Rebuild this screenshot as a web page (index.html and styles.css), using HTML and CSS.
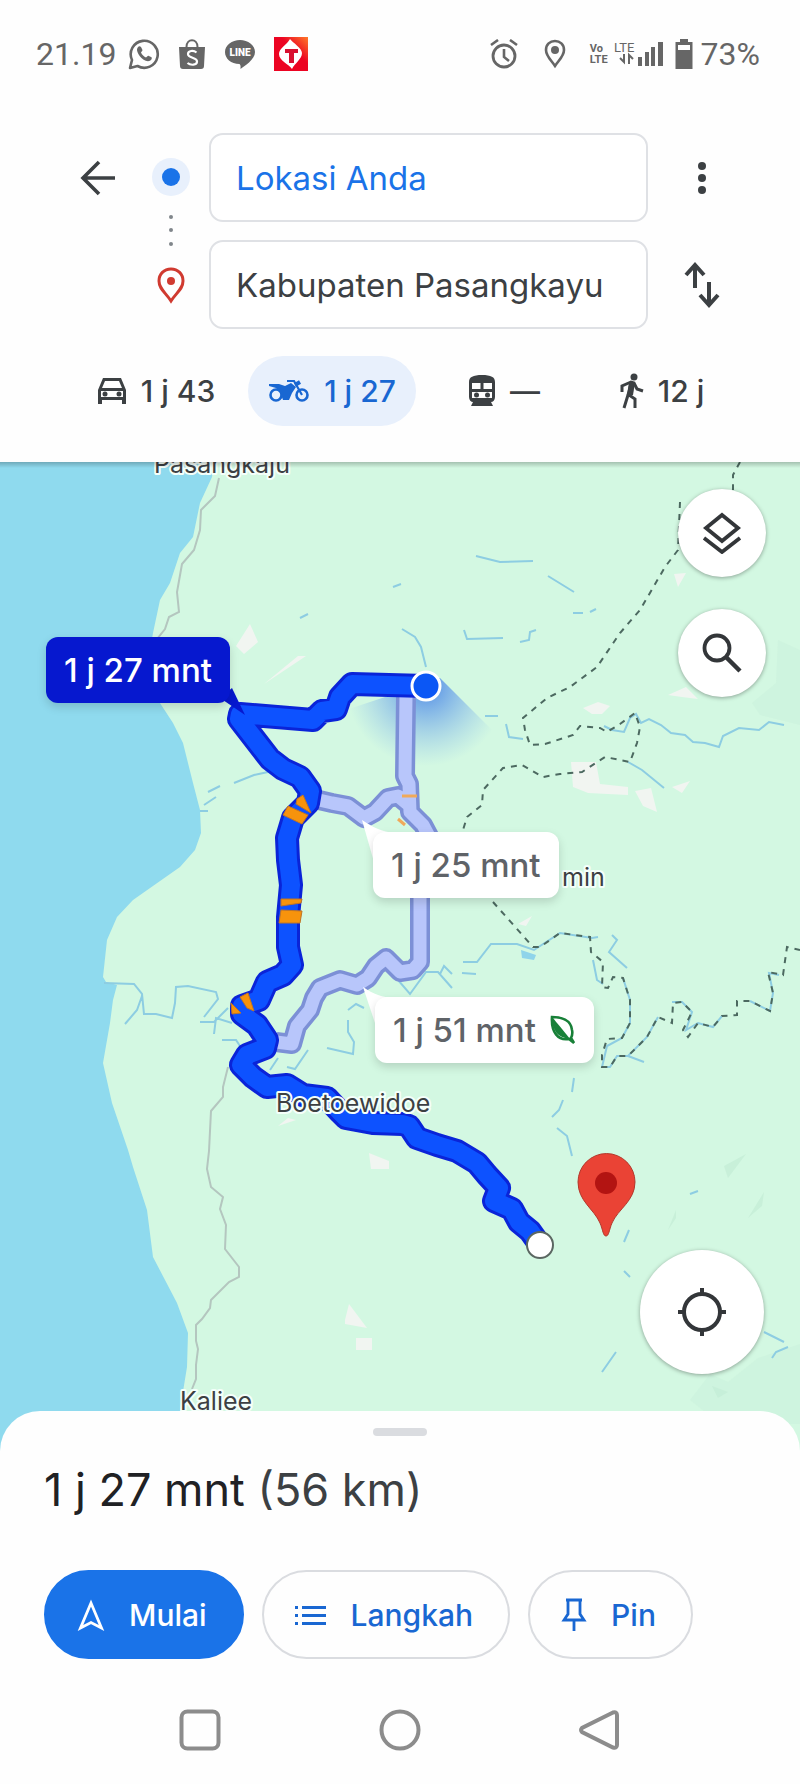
FILE: index.html
```
<!DOCTYPE html>
<html lang="id">
<head>
    <meta charset="UTF-8">
    <meta name="viewport" content="width=device-width, initial-scale=1.0">
    <title>Rute - Kabupaten Pasangkayu</title>
    <link rel="stylesheet" href="styles.css">
</head>
<body>
    <!-- Phone status bar -->
    <div class="status-bar">
        <div class="status-left">
            <span class="clock">21.19</span>
            <svg width="32" height="32" viewBox="0 0 32 32">
                <path d="M2 30l2-8A13.500 13.500 0 1 1 9.500 28z" fill="none" stroke="#666" stroke-width="2.600" stroke-linejoin="round"/>
                <path d="M10 9c1-1 2-1 3 0l1.500 3c0 1-1.500 2-1.500 2.500 1 2.500 3 4 5 5 1-.5 1.500-2 2.500-1.800l3 1.500c1 1-.5 4-3.500 4C14 23 8.500 15 9 11z" fill="#666"/>
            </svg>
            <svg width="28" height="32" viewBox="0 0 28 32">
                <path d="M1 9h26l-1 19a3 3 0 0 1-3 3H5a3 3 0 0 1-3-3z" fill="#666"/>
                <path d="M8.500 9c0-9 11-9 11 0" fill="none" stroke="#666" stroke-width="2"/>
                <path d="M18.500 14.500c-3-2.500-8.500-2-8.500 1.500 0 4.500 9 3 9 7.500 0 4-6.500 4-9.500 1.500" fill="none" stroke="#fff" stroke-width="2.200"/>
            </svg>
            <svg width="32" height="32" viewBox="0 0 32 32">
                <path d="M16 2c8 0 15 5 15 12 0 8-11 14-14.500 17 0-2 .5-4-1-5C7 26 1 20.500 1 14 1 7 8 2 16 2z" fill="#666"/>
                <text x="16" y="18" class="line-logo">LINE</text>
            </svg>
            <svg width="34" height="34" viewBox="0 0 34 34">
                <defs>
                    <linearGradient id="tsel" x1="0" y1="1" x2="1" y2="0">
                        <stop offset="0.600" stop-color="#ec0422"/>
                        <stop offset="1" stop-color="#ff7a2a"/>
                    </linearGradient>
                </defs>
                <path d="M0 0h34v34H0z" fill="url(#tsel)"/>
                <path d="M16 2c3 4 12 9 12 14 0 6-7 10-10 16C15 27 5 24 5 17 5 11 13 8 16 2z" fill="#fff"/>
                <path d="M11 12h13v4h-4v10h-5V16h-4z" fill="#d81030"/>
            </svg>
        </div>
        <div class="status-right">
            <svg class="alarm" width="28" height="30" viewBox="0 0 28 30" fill="none" stroke="#666">
                <circle cx="14" cy="17" r="11" stroke-width="2.800"/>
                <path d="M14 10v8l5 4M1 6l7-5M27 6l-7-5" stroke-width="2.600"/>
            </svg>
            <svg class="place" width="22" height="30" viewBox="0 0 22 30">
                <path d="M11 2c-5 0-9 3.500-9 9 0 6 5 10 9 16 4-6 9-10 9-16 0-5.500-4-9-9-9z" fill="none" stroke="#666" stroke-width="2.600"/>
                <circle cx="11" cy="11" r="4" fill="#666"/>
            </svg>
            <span class="volte">Vo<br>LTE</span>
            <svg class="signal" width="50" height="26" viewBox="0 0 50 26">
                <text x="0" y="11" class="lte">LTE</text>
                <path d="M10 13v8l-4-4M15 23v-9l4 4" fill="none" stroke="#666" stroke-width="2"/>
                <path d="M24 16h4v9h-4zM31 11h4v14h-4zM37 6h4v19h-4zM44 1h5v24h-5z" fill="#666"/>
            </svg>
            <svg class="battery" width="18" height="30" viewBox="0 0 18 30">
                <path d="M5 0h8v3h4.500v27H.5V3H5zM3 6v5h12V6z" fill="#666" fill-rule="evenodd"/>
            </svg>
            <span class="percent">73%</span>
        </div>
    </div>

    <!-- Origin and destination -->
    <header class="directions">
        <form class="places">
            <button type="button" class="icon-btn back" aria-label="Kembali">
                <svg width="38" height="38" viewBox="0 0 38 38" fill="none" stroke="#3c4043" stroke-width="3.600">
                    <path d="M36 19H4M20 3L4 19l16 16"/>
                </svg>
            </button>
            <svg class="markers" width="40" height="196" viewBox="0 0 40 196">
                <circle cx="20" cy="44" r="19" fill="#e8f0fc"/>
                <circle cx="20" cy="44" r="9" fill="#1a73e8"/>
                <g fill="#80868b">
                    <circle cx="20" cy="84" r="2"/>
                    <circle cx="20" cy="97" r="2"/>
                    <circle cx="20" cy="111" r="2"/>
                </g>
                <path d="M20 136c-7 0-12 5-12 12 0 8 7 12 12 20 5-8 12-12 12-20 0-7-5-12-12-12z" fill="none" stroke="#d03a30" stroke-width="3"/>
                <circle cx="20" cy="148" r="4" fill="#d03a30"/>
            </svg>
            <input class="place-input origin" type="text" value="Lokasi Anda" aria-label="Titik awal">
            <button type="button" class="icon-btn more" aria-label="Opsi lainnya">
                <svg width="10" height="34" viewBox="0 0 10 34" fill="#3c4043">
                    <circle cx="5" cy="5" r="4"/>
                    <circle cx="5" cy="17" r="4"/>
                    <circle cx="5" cy="29" r="4"/>
                </svg>
            </button>
            <input class="place-input destination" type="text" value="Kabupaten Pasangkayu" aria-label="Tujuan">
            <button type="button" class="icon-btn swap" aria-label="Tukar">
                <svg width="36" height="46" viewBox="0 0 36 46" fill="none" stroke="#3c4043" stroke-width="4">
                    <path d="M11 26V3M2 13l9-10 9 10M25 20v23M16 33l9 10 9-10"/>
                </svg>
            </button>
        </form>

        <nav class="modes">
            <button type="button" class="mode">
                <svg width="30" height="28" viewBox="0 0 30 28">
                    <path d="M6 1h18l5 12v14h-4v-4H5v4H1V13zM8 4l-3 7h20l-3-7zM4 14v6h22v-6z" fill="#3c4043" fill-rule="evenodd"/>
                    <circle cx="8" cy="17" r="2.500" fill="#3c4043"/>
                    <circle cx="22" cy="17" r="2.500" fill="#3c4043"/>
                </svg>
                <span>1 j 43</span>
            </button>
            <button type="button" class="mode active">
                <svg width="42" height="26" viewBox="0 0 42 26" fill="none" stroke="#1967d2" stroke-width="2.600">
                    <circle cx="8" cy="17" r="5.500"/>
                    <circle cx="34" cy="17" r="5.500"/>
                    <path d="M34 17L26 3h-7" stroke-width="2.200"/>
                    <path d="M1 6h10l6 2 6-3 5 4-4 6-3 7h-6l-3-8-4-4-7-2z" fill="#1967d2" stroke="none"/>
                    <path d="M27 7l5-3" stroke-width="4"/>
                </svg>
                <span>1 j 27</span>
            </button>
            <button type="button" class="mode transit">
                <svg width="28" height="34" viewBox="0 0 28 34">
                    <path d="M14 1C5 1 1 3 1 8v15c0 3 2 5 4 5l-2 4h22l-2-4c2 0 4-2 4-5V8c0-5-4-7-13-7zM4 9h8.500v6H4zM15.500 9H24v6h-8.500zM4 18h20v6H4z" fill="#3c4043" fill-rule="evenodd"/>
                    <circle cx="8.500" cy="21" r="2.500" fill="#3c4043"/>
                    <circle cx="19.500" cy="21" r="2.500" fill="#3c4043"/>
                </svg>
                <span>—</span>
            </button>
            <button type="button" class="mode">
                <svg width="24" height="36" viewBox="0 0 24 36">
                    <circle cx="14" cy="4" r="3.500" fill="#3c4043"/>
                    <path d="M2 19v-6l9-4 3 1 3 6 6 2M11 10l-3 12-4 13M9 22l6 4v9" fill="none" stroke="#3c4043" stroke-width="3"/>
                    <path d="M9 9l6 1-2 12-6 2z" fill="#3c4043"/>
                </svg>
                <span>12 j</span>
            </button>
        </nav>
    </header>

    <!-- Map -->
    <main class="map">
        <svg class="map-canvas" viewBox="0 462 800 990" preserveAspectRatio="xMinYMin slice">
            <defs>
                <radialGradient id="beam" gradientUnits="userSpaceOnUse" cx="426" cy="686" r="80">
                    <stop offset="0" stop-color="#2f6fe8" stop-opacity="0.800"/>
                    <stop offset="1" stop-color="#6fa8f0" stop-opacity="0"/>
                </radialGradient>
                <linearGradient id="edge" x1="0" y1="0" x2="0" y2="1">
                    <stop offset="0" stop-color="#000" stop-opacity="0.220"/>
                    <stop offset="1" stop-color="#000" stop-opacity="0"/>
                </linearGradient>
            </defs>

            <path d="M0 462H2000V1452H0z" fill="#d3f8e2"/>

            <!-- hill shading -->
            <g fill="#c3ecd6">
                <path d="M778 640l22 10v75l-40-10-8-12 24-20zM690 1400l20-26 18 8 30-24 42-14v80h-80z" opacity="0.300"/>
                <path d="M724 1166l22-12-18 24zM748 1218l16-26-2 14zM668 1230l8-20v8zM712 1386l16 6-10 6z" opacity="0.700"/>
            </g>

            <!-- sea -->
            <path d="M0 462H214L212 477 200 503 193 537 180 553 170 583 160 600 153 633 150 650 158 700 173 723 183 743 193 783 200 810 201 833 195 850 180 867 133 900 117 917 107 940 103 977 106 982 117 985 113 1000 110 1023 103 1063 112 1103 128 1150 133 1167 147 1210 153 1257 177 1303 188 1333 187 1367 180 1410 176 1452H0z" fill="#8fdaee"/>

            <!-- clearings -->
            <g fill="#f1f5f1">
                <path d="M236 646l14-22 8 18-14 12zM264 684l34-28h8zM571 762h25l4 22 28 3v8l-40-2-15-6zM635 791l16-3 6 24-14-6zM672 787l18-6-8 12zM583 708l15-6 12 4-8 8h-10zM674 574l12-1-8 14zM668 695l18-8 12 12-16-2zM518 924l14-8-6 10zM278 1126l10-8 8 2zM369 1153l20 8v8h-18zM345 1320l4-16 18 24-22-4zM356 1338h16v12h-16z"/>
            </g>

            <!-- rivers -->
            <g fill="none" stroke="#8dcde2" stroke-width="2">
                <path d="M476 556l24 6 33-1M548 576l26 16M573 613h10M590 612l6-3M464 630l3 9 36-1M520 642l9-2 1-8 6-2M393 587l8-3M300 618l8-4M402 629l13 8 6 10 5 20"/>
                <path d="M485 716h13M506 724l3 13 14 2M604 726l8 4 12 2 6-14 6-4 5 9 8-4 12 6 10 8 14 2 8 7 12 1 14 4 4-11 16-8 20 2 10-8 15 3M628 762l14 8 22 18"/>
                <path d="M234 783l20-8 14-3M204 805l12-8M208 792l12-6M200 811h8"/>
                <path d="M104 983l30 1 8 10 2 20 12 0 16 4 3-15 1-16 12-1 28 6 2 7-14 18M142 996l-5 14-12 14M200 1022h14l14-14M214 1034l2-16 16 5M222 1040l14 0 4 6"/>
                <path d="M270 1070l8-12M287 1067l8 2 13-19M348 1020v12l6 10-1 12-26-6M348 1010l8-6 8 4M398 980l12 14 16-22 12 0 14 16M440 974l4-8 8 8M463 962h14l14-18h26l17 6 26-17 32 5 6-1M612 935l5 5-8 12 18 16M593 960l4 20 6 4M462 973l14 1"/>
                <path d="M623 978l7 22v23l-8 15-15 8-5 21 8 0 7-11 11 0 19-19 11-20M628 1056l16 6M672 1002l10 0 10 10-6 18 12-7 15 4 9-11M750 1001l20 10 3-18-4-20 10 2M574 1078l-2 14M563 1100l-4 10-7 7M557 1128l10 8 5 20M624 1242l5-12M624 1271l6 6M602 1372l14-20M764 1332l20 10M772 1358l4-6 12-5M690 1194l8-3"/>
            </g>
            <path d="M521 950l15 5-2 5-12-2z" fill="#8fd4ea"/>

            <!-- roads -->
            <path d="M219 478l-4 18-14 14-1 20-6 20-12 14-5 28 2 20-10 5-4 12-8 10M228 1067l-5 20v10l-12 14-2 40-2 18 4 18 12 10-3 12 6 16-1 24 14 18v10l-10 5-18 18-1 8-8 11-6 6v16l2 8-2 16v14l-4 10" fill="none" stroke="#b4c6bf" stroke-width="2"/>

            <!-- district borders -->
            <g fill="none" stroke="#4c6960" stroke-width="2" stroke-dasharray="6 6">
                <path d="M740 462L733 475V490M680 502L678 550 665 567 640 610 620 633 597 667 570 687 547 698 523 718 525 730 530 745 545 744 573 735 580 726 600 728 607 732 620 724 635 713 640 727 637 743 630 762 605 757 582 772 560 774 543 777 522 765 503 768 483 790 482 805 467 817 463 830"/>
                <path d="M493 902L533 947 540 947 560 933 590 937 591 952 603 962 602 987 608 988 613 977 623 978 630 1000V1023L622 1038 607 1039 602 1055V1067H610L617 1056H628L647 1037 658 1017 672 1023 673 1003 682 1002 692 1012 683 1030 688 1037 698 1023 713 1027 722 1016 737 1015V1001H750L770 1011 773 993 768 972 783 975 787 947 800 950"/>
            </g>

            <!-- alternative routes -->
            <path d="M440 678L492 730V780H340V712L400 692z" fill="url(#beam)"/>
            <g class="route alt">
                <path class="casing" d="M406 696L405 776 409 784 410 812 423 825 431 840 420 860V962L413 970 400 972 394 966 386 958 376 966 368 978 357 985 340 980 320 988 314 998 310 1010 297 1026 292 1044 276 1042M410 806L398 796 388 798 375 812 364 818 348 806 332 803 306 797"/>
                <path class="fill" d="M406 696L405 776 409 784 410 812 423 825 431 840 420 860V962L413 970 400 972 394 966 386 958 376 966 368 978 357 985 340 980 320 988 314 998 310 1010 297 1026 292 1044 276 1042M410 806L398 796 388 798 375 812 364 818 348 806 332 803 306 797"/>
            </g>
            <path d="M402 796h15M398 819l7 6" stroke="#f0a95a" stroke-width="3"/>

            <!-- main route -->
            <g class="route main">
                <path class="casing" d="M426 686L352 684 340 697 336 709 322 711 313 720 240 714 239 719 270 759 283 769 300 777 310 791 308 803 293 818 287 838 288 860 291 885 288 917 288 947 292 965 283 975 267 982 259 1000 242 1006 242 1014 257 1025 267 1040 265 1048 247 1055 241 1065 253 1077 267 1087 287 1085 303 1095 327 1098 340 1112 346 1118 373 1123 402 1124 409 1126 417 1138 437 1145 457 1151 477 1163 487 1175 499 1188 494 1201 512 1209 519 1222 530 1231 540 1245"/>
                <path class="fill" d="M426 686L352 684 340 697 336 709 322 711 313 720 240 714 239 719 270 759 283 769 300 777 310 791 308 803 293 818 287 838 288 860 291 885 288 917 288 947 292 965 283 975 267 982 259 1000 242 1006 242 1014 257 1025 267 1040 265 1048 247 1055 241 1065 253 1077 267 1087 287 1085 303 1095 327 1098 340 1112 346 1118 373 1123 402 1124 409 1126 417 1138 437 1145 457 1151 477 1163 487 1175 499 1188 494 1201 512 1209 519 1222 530 1231 540 1245"/>
            </g>
            <!-- slow traffic -->
            <g fill="#f7930c" stroke="#bf7426" stroke-width="1">
                <path d="M297 799l6-4 8 18-15-9zM288 806l20 9-6 9-19-9zM281 899h21l-1 4-20 3zM281 910l21 1-2 12h-21zM240 997l8-4 6 18-7-3zM231 1003l10 10-9 1z"/>
            </g>

            <!-- start and end of the route -->
            <circle cx="426" cy="686" r="14" fill="#0b57f5" stroke="#fff" stroke-width="3"/>
            <circle cx="540" cy="1245" r="13" fill="#fff" stroke="#5b6762" stroke-width="2"/>
            <path d="M606 1236c-3 0-3-6-6-13-6-14-22-22-22-41a28 28 0 0 1 57 0c0 19-17 27-23 41-3 7-3 13-6 13z" fill="#ea4335" stroke="#b3392c" stroke-width="1"/>
            <circle cx="606" cy="1183" r="11" fill="#b31412"/>

            <g class="map-labels">
                <text x="154" y="473">Pasangkaju</text>
                <text x="562" y="886">min</text>
                <text x="276" y="1112">Boetoewidoe</text>
                <text x="180" y="1410">Kaliee</text>
            </g>

            <!-- callout tails -->
            <path d="M220 698L245 715 232 688z" fill="#0618cf"/>
            <path d="M362 820L374 862 400 832C385 834 374 828 362 820z" fill="#fff"/>
            <path d="M363 987L376 1026 402 997C387 999 376 996 363 987z" fill="#fff"/>
            <path d="M0 462H2000V468H0z" fill="url(#edge)"/>
        </svg>

        <div class="callout selected">1 j 27 mnt</div>
        <div class="callout faster">1 j 25 mnt</div>
        <div class="callout eco">1 j 51 mnt
            <svg width="26" height="30" viewBox="0 0 26 30">
                <path d="M2 2c9 0 19 3 20 13 1 4-1 8-1 8l3 5-5-4C8 26 1 17 2 2z" fill="none" stroke="#188038" stroke-width="2.600"/>
                <path d="M2 2c0 14 6 21 18 22C13 15 8 9 2 2z" fill="#188038"/>
            </svg>
        </div>

        <button type="button" class="fab layers" aria-label="Lapisan">
            <svg width="40" height="42" viewBox="0 0 40 42" fill="none" stroke="#333639" stroke-width="3.800">
                <path d="M20 3L36 16 20 29 4 16zM2 26l18 14 18-14"/>
            </svg>
        </button>
        <button type="button" class="fab search" aria-label="Telusuri">
            <svg width="40" height="40" viewBox="0 0 40 40" fill="none" stroke="#333639" stroke-width="3.800">
                <circle cx="15" cy="15" r="12.500"/>
                <path d="M24 24l14 14" stroke-width="4.500"/>
            </svg>
        </button>
        <button type="button" class="fab locate" aria-label="Lokasi saya">
            <svg width="48" height="48" viewBox="0 0 48 48" fill="none" stroke="#333639" stroke-width="4">
                <circle cx="24" cy="24" r="18"/>
                <path d="M24 0v6M24 42v6M0 24h6M42 24h6"/>
            </svg>
        </button>
    </main>

    <!-- Route summary -->
    <section class="sheet">
        <div class="handle"></div>
        <h1>1 j 27 mnt <span>(56 km)</span></h1>
        <div class="actions">
            <button type="button" class="action primary">
                <svg width="28" height="32" viewBox="0 0 28 32" fill="none" stroke="#fff" stroke-width="2.800">
                    <path d="M14 4L3.500 29 14 23.500 24.500 29z"/>
                </svg>
                Mulai
            </button>
            <button type="button" class="action">
                <svg width="32" height="20" viewBox="0 0 32 20" fill="#1967d2">
                    <path d="M0 1h3v3H0zM7 1h24v3H7zM0 9h3v3H0zM7 9h24v3H7zM0 17h3v3H0zM7 17h24v3H7z"/>
                </svg>
                Langkah
            </button>
            <button type="button" class="action pin">
                <svg width="26" height="34" viewBox="0 0 26 34" fill="none" stroke="#1967d2" stroke-width="2.800">
                    <path d="M5 2h16M7 2v14l-4 6h20l-4-6V2M13 22v11"/>
                </svg>
                Pin
            </button>
        </div>
    </section>

    <!-- Phone navigation bar -->
    <nav class="system-nav">
        <button type="button" aria-label="Aplikasi terbaru">
            <svg width="42" height="42" viewBox="0 0 42 42"><rect x="2.500" y="2.500" width="37" height="37" rx="6"/></svg>
        </button>
        <button type="button" aria-label="Beranda">
            <svg width="42" height="42" viewBox="0 0 42 42"><circle cx="21" cy="21" r="18.500"/></svg>
        </button>
        <button type="button" aria-label="Kembali">
            <svg width="42" height="42" viewBox="0 0 42 42"><path d="M34 3.500L3 19q-2 2 0 4l31 15.500q4 1 4-2.500V6q0-3.500-4-2.500z"/></svg>
        </button>
    </nav>
</body>
</html>
```
FILE: styles.css
```
* {
    box-sizing: border-box;
}

body {
    margin: 0;
    min-height: 100vh;
    display: flex;
    flex-direction: column;
    background: #fefefe;
    color: #3c4043;
    font-family: Inter, "Open Sans", sans-serif;
}

button {
    padding: 0;
    border: none;
    background: none;
    color: inherit;
    font-family: inherit;
    cursor: pointer;
}

svg {
    display: block;
    flex-shrink: 0;
}

/* Status bar */
.status-bar {
    display: flex;
    justify-content: space-between;
    align-items: center;
    height: 108px;
    padding: 0 40px 0 36px;
    color: #666;
    font-family: Roboto, sans-serif;
    font-size: 32px;
}

.status-left,
.status-right {
    display: flex;
    align-items: center;
}

.status-left {
    gap: 18px;
}

.clock {
    margin-right: -6px;
}

.line-logo {
    fill: #fff;
    font-family: Roboto, sans-serif;
    font-size: 10px;
    font-weight: 900;
    text-anchor: middle;
}

.place {
    margin: 0 24px 0 26px;
}

.volte {
    font-size: 11px;
    line-height: 11px;
    font-weight: 700;
}

.signal {
    margin: 0 11px 0 6px;
}

.lte {
    fill: #666;
    font-size: 13px;
}

.percent {
    margin-left: 8px;
}

/* Origin and destination */
.directions {
    padding: 25px 44px 36px 64px;
}

.places {
    display: grid;
    grid-template-columns: 68px 77px 1fr 108px;
    grid-template-rows: 89px 89px;
    row-gap: 18px;
    margin: 0;
}

.markers {
    grid-row: 1 / 3;
    grid-column: 2;
    justify-self: center;
}

.icon-btn {
    display: flex;
    align-items: center;
    justify-content: center;
}

.place-input {
    grid-column: 3;
    width: 100%;
    padding: 0 25px;
    border: 2px solid #dfe1e5;
    border-radius: 14px;
    background: #fff;
    color: #3c4043;
    font-family: inherit;
    font-size: 33px;
}

.origin {
    color: #1a73e8;
}

.modes {
    display: grid;
    grid-template-columns: 176fr 176fr 168fr 148fr;
    justify-items: center;
    margin: 27px 0 0 4px;
    padding-right: 20px;
}

.mode {
    display: flex;
    align-items: center;
    gap: 14px;
    height: 70px;
    padding: 0 20px;
    border-radius: 35px;
    font-size: 30px;
    font-weight: 500;
}

.mode.active {
    background: #e8f0fc;
    color: #1967d2;
}

/* Map */
.map {
    position: relative;
    flex: 1;
    min-height: 800px;
    overflow: hidden;
}

.map-canvas {
    position: absolute;
    inset: 0;
    width: 100%;
    height: 100%;
}

.route path {
    fill: none;
    stroke-linejoin: round;
}

.alt .casing {
    stroke: #7c90d6;
    stroke-width: 20;
}

.alt .fill {
    stroke: #b8c6fb;
    stroke-width: 13;
}

.main .casing {
    stroke: #0a24d8;
    stroke-width: 24;
}

.main .fill {
    stroke: #0d52ff;
    stroke-width: 18;
}

.map-labels text {
    fill: #3c4043;
    stroke: #f4fffa;
    stroke-width: 4px;
    stroke-linejoin: round;
    paint-order: stroke;
    font-size: 25px;
}

.callout {
    position: absolute;
    display: flex;
    align-items: center;
    gap: 14px;
    height: 66px;
    padding: 0 18px;
    border-radius: 12px;
    background: #fff;
    box-shadow: 0 4px 10px rgba(0, 0, 0, 0.15);
    color: #5f6368;
    font-size: 33px;
    font-weight: 500;
    white-space: nowrap;
}

.selected {
    left: 46px;
    top: 175px;
    background: #0618cf;
    color: #fff;
}

.faster {
    left: 373px;
    top: 370px;
}

.eco {
    left: 375px;
    top: 535px;
}

.fab {
    position: absolute;
    right: 34px;
    display: flex;
    align-items: center;
    justify-content: center;
    width: 88px;
    height: 88px;
    border-radius: 50%;
    background: #fff;
    box-shadow: 0 1px 4px rgba(0, 0, 0, 0.35);
}

.layers {
    top: 27px;
}

.search {
    top: 147px;
}

.locate {
    right: 36px;
    bottom: 77px;
    width: 124px;
    height: 124px;
}

/* Route summary */
.sheet {
    position: relative;
    margin-top: -40px;
    padding: 17px 44px 0;
    border-radius: 40px 40px 0 0;
    background: #fefefe;
}

.handle {
    width: 54px;
    height: 8px;
    margin: 0 auto;
    border-radius: 4px;
    background: #dadce0;
}

.sheet h1 {
    margin: 24px 0 50px;
    color: #202124;
    font-size: 45px;
    line-height: 60px;
    font-weight: 400;
}

.sheet h1 span {
    color: #3c4043;
}

.actions {
    display: flex;
    gap: 18px;
}

.action {
    display: flex;
    align-items: center;
    gap: 24px;
    height: 89px;
    padding: 0 35px 0 31px;
    border: 2px solid #dadce0;
    border-radius: 45px;
    color: #1967d2;
    font-size: 30px;
    font-weight: 500;
}

.primary {
    border-color: #1a73e8;
    background: #1a73e8;
    color: #fff;
}

/* System navigation */
.system-nav {
    display: grid;
    grid-template-columns: 1fr 1fr 1fr;
    align-items: center;
    height: 125px;
    padding: 16px 100px 0;
}

.system-nav button {
    justify-self: center;
}

.system-nav svg {
    fill: none;
    stroke: #8c8c8c;
    stroke-width: 4px;
}
```
